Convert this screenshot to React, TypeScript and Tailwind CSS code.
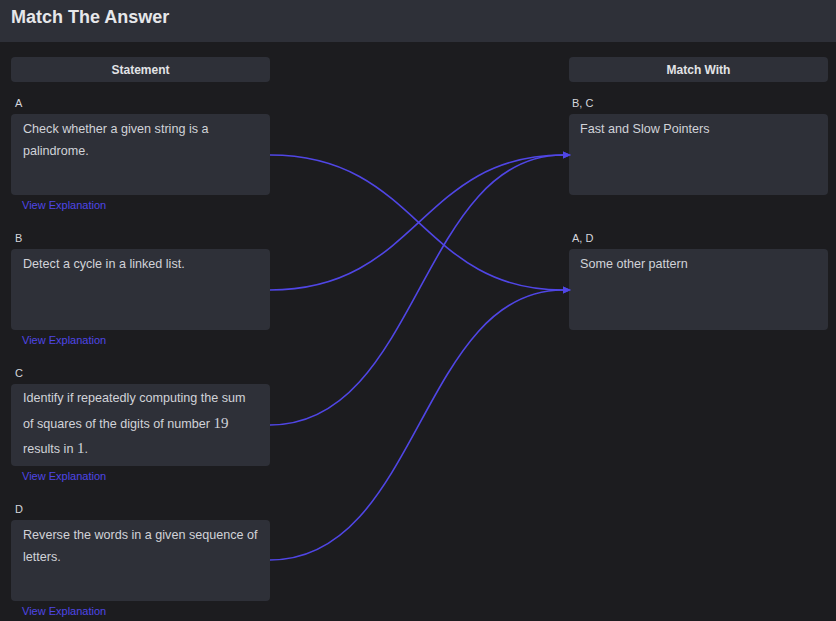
import React from "react";

const serif = { fontFamily: '"Liberation Serif", serif' };

const statements = [
  { id: "A", lines: <>Check whether a given string is a palindrome.</> },
  { id: "B", lines: <>Detect a cycle in a linked list.</> },
  {
    id: "C",
    lines: (
      <>
        Identify if repeatedly computing the sum of squares of the digits of number{" "}
        <span className="text-[15px] leading-none" style={serif}>19</span> results in{" "}
        <span className="text-[15px] leading-none" style={serif}>1</span>.
      </>
    ),
    tall: true,
  },
  { id: "D", lines: <>Reverse the words in a given sequence of letters.</> },
];

const matches = [
  { id: "B, C", text: "Fast and Slow Pointers" },
  { id: "A, D", text: "Some other pattern" },
];

function curve(x0: number, y0: number, x1: number, y1: number) {
  const mx = (x0 + x1) / 2;
  return `M ${x0} ${y0} C ${mx} ${y0}, ${mx} ${y1}, ${x1 - 6} ${y1}`;
}

export default function App() {
  const left = [155, 290, 425, 560];
  const right = [155, 290];
  const links: [number, number][] = [
    [0, 1],
    [1, 0],
    [2, 0],
    [3, 1],
  ];
  return (
    <div
      className="relative min-h-[621px] w-full bg-[#1c1c1f] text-[#d4d6dc]"
      style={{ fontFamily: '"Liberation Sans", Arial, sans-serif' }}
    >
      <div className="h-[42px] bg-[#2e3038] pl-[11px] pt-[6px]">
        <h1 className="text-[18px] font-bold leading-[22px] text-[#e6e7ea]">Match The Answer</h1>
      </div>
      <div className="grid grid-cols-[259px_1fr_259px] pl-[11px] pr-[8px] pt-[15px]">
        <div className="flex flex-col">
          <div className="mb-[14px] flex h-[25px] items-center justify-center rounded bg-[#2e3038] text-[12px] font-bold text-[#e2e3e6]">
            Statement
          </div>
          {statements.map((s) => (
            <div key={s.id} className="flex flex-col">
              <div className="h-[14px] pl-[4px] text-[11px] leading-[14px] text-[#d4d6dc]">{s.id}</div>
              <div
                className={`mt-[4px] rounded bg-[#2e3038] px-[12px] text-[12.6px] text-[#d1d3d8] ${
                  s.tall ? "h-[82px] pt-[2px] leading-[25.5px]" : "min-h-[81px] py-[4px] leading-[22px]"
                }`}
              >
                {s.lines}
              </div>
              <div className="mt-[3px] mb-[19px] h-[14px] pl-[11px] text-[11px] leading-[14px] text-[#4f46e5]">
                View Explanation
              </div>
            </div>
          ))}
        </div>
        <div />
        <div className="flex flex-col">
          <div className="mb-[14px] flex h-[25px] items-center justify-center rounded bg-[#2e3038] text-[12px] font-bold text-[#e2e3e6]">
            Match With
          </div>
          {matches.map((m) => (
            <div key={m.id} className="flex flex-col">
              <div className="h-[14px] pl-[3px] text-[11px] leading-[14px] text-[#d4d6dc]">{m.id}</div>
              <div className="mt-[4px] min-h-[81px] rounded bg-[#2e3038] px-[11px] py-[4px] text-[12.6px] leading-[22px] text-[#d1d3d8]">
                {m.text}
              </div>
              <div className="mt-[3px] mb-[19px] h-[14px]" />
            </div>
          ))}
        </div>
      </div>
      <svg className="pointer-events-none absolute left-0 top-0" width="836" height="621">
        <defs>
          <marker id="arr" markerWidth="8" markerHeight="8" refX="0" refY="4" orient="auto" markerUnits="userSpaceOnUse">
            <path d="M0,0.5 L8,4 L0,7.5 Z" fill="#5046e5" />
          </marker>
        </defs>
        {links.map(([l, r], i) => (
          <path
            key={i}
            d={curve(270, left[l], 569, right[r])}
            fill="none"
            stroke="#5046e5"
            strokeWidth="1.6"
            markerEnd="url(#arr)"
          />
        ))}
      </svg>
    </div>
  );
}
